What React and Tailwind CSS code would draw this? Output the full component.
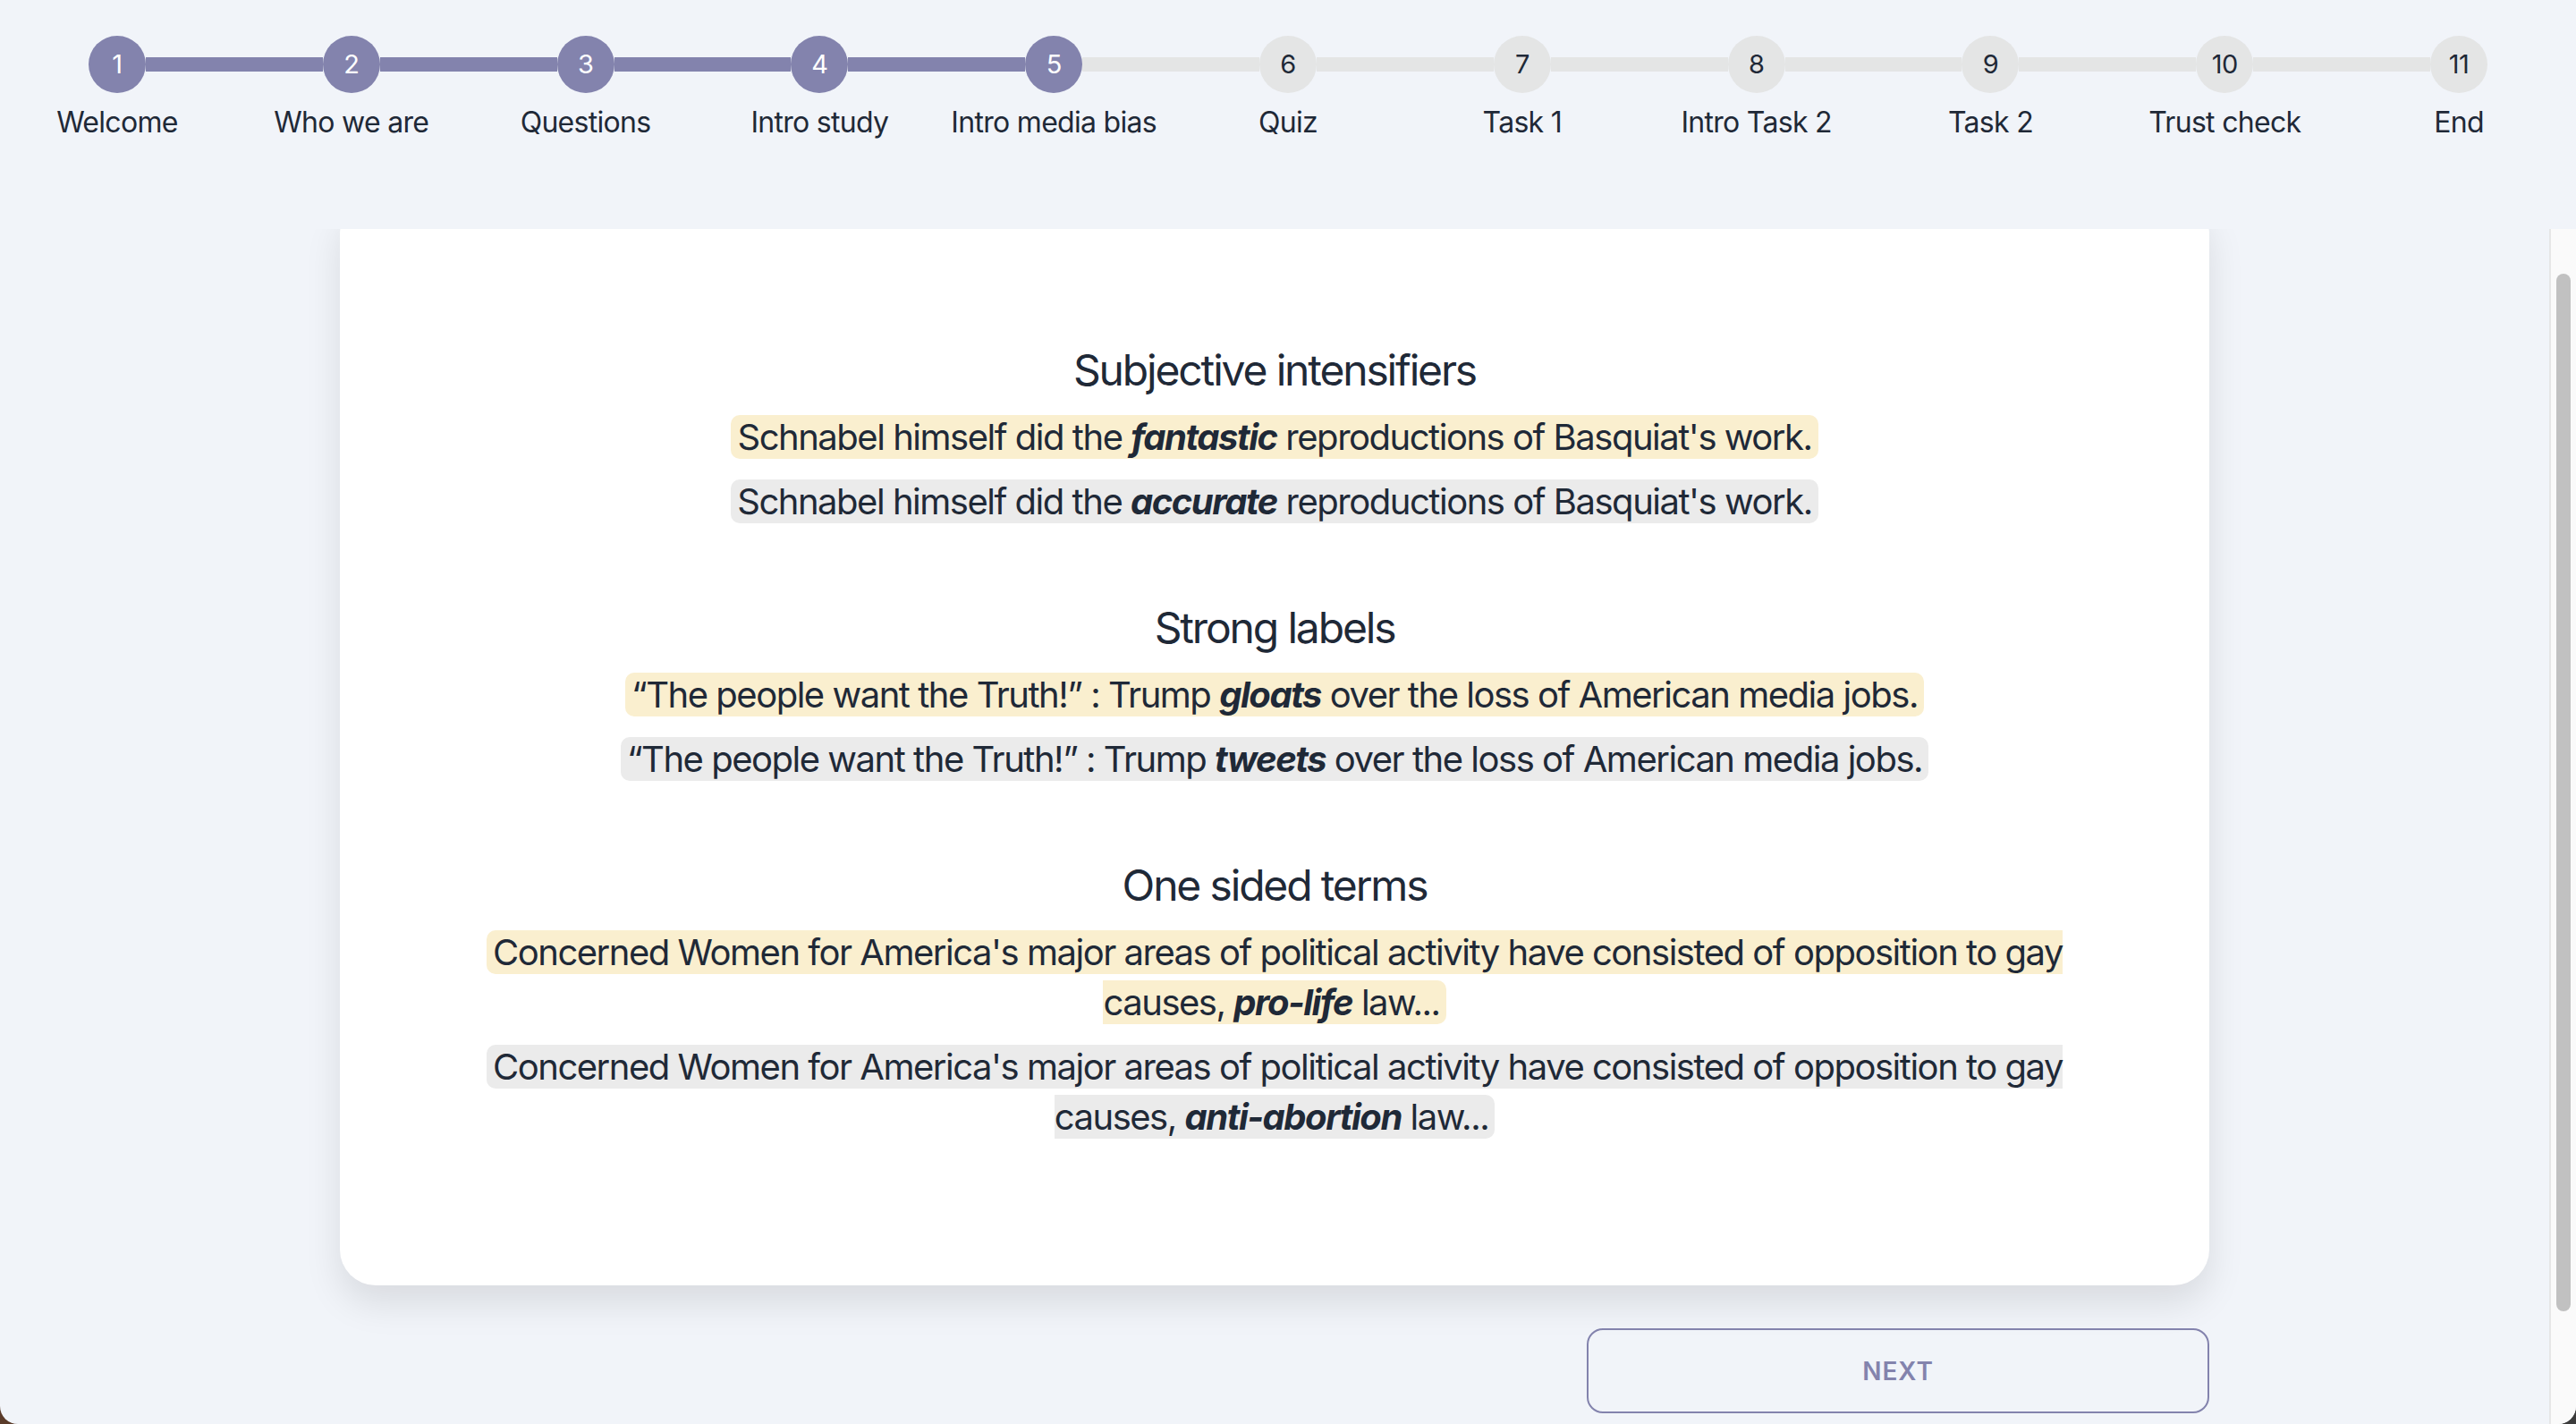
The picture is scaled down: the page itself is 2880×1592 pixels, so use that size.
import React, { useLayoutEffect, useRef } from "react";

const steps = [
  "Welcome",
  "Who we are",
  "Questions",
  "Intro study",
  "Intro media bias",
  "Quiz",
  "Task 1",
  "Intro Task 2",
  "Task 2",
  "Trust check",
  "End",
];
const ACTIVE = 5;

function Step({ index, label }) {
  const n = index + 1;
  const done = n <= ACTIVE;
  const first = index === 0;
  const last = index === steps.length - 1;
  const leftCls = first
    ? "h-[16px] flex-1"
    : n <= ACTIVE
    ? "h-[16px] flex-1 bg-[#8383ad]"
    : "h-[16px] flex-1 bg-[#e4e5e5]";
  const rightCls = last
    ? "h-[16px] flex-1"
    : n < ACTIVE
    ? "h-[16px] flex-1 bg-[#8383ad]"
    : "h-[16px] flex-1 bg-[#e4e5e5]";
  return (
    <div className="flex flex-col items-center">
      <div className="flex w-full items-center">
        <div className={leftCls} />
        <div
          className={
            done
              ? "flex h-[64px] w-[64px] items-center justify-center rounded-full bg-[#8383ad] text-[29px] tracking-[-0.02em] text-white"
              : "flex h-[64px] w-[64px] items-center justify-center rounded-full bg-[#e4e5e5] text-[29px] tracking-[-0.02em] text-[#1f2937]"
          }
        >
          {n}
        </div>
        <div className={rightCls} />
      </div>
      <div className="mt-[9px] whitespace-nowrap text-[32px] leading-[48px] tracking-[-0.022em] text-[#1f2937]">
        {label}
      </div>
    </div>
  );
}

function Mark({ yellow, children }) {
  return (
    <span
      className={
        yellow
          ? "rounded-[10px] bg-[#faefcf] px-[7px]"
          : "rounded-[10px] bg-[#ebebeb] px-[7px]"
      }
    >
      {children}
    </span>
  );
}

function B({ children }) {
  return <b className="font-bold italic">{children}</b>;
}

function Section({ title, children }) {
  return (
    <section className="flex flex-col">
      <h2 className="mb-[15px] text-center text-[48px] leading-[64px] font-normal tracking-[-0.045em] text-[#1f2937]">
        {title}
      </h2>
      <div className="flex flex-col gap-[16px]">{children}</div>
    </section>
  );
}

function P({ children }) {
  return (
    <p className="text-center text-[40px] leading-[56px] tracking-[-0.037em] text-[#1f2937]">
      {children}
    </p>
  );
}

function FakeScrollbar() {
  return (
    <div className="flex w-[30px] shrink-0 flex-col border-l-2 border-[#e6e6e6] bg-[#fafafa] pt-[50px] pl-[6px]">
      <div className="h-[1160px] w-[16px] rounded-full bg-[#c1c1c1]" />
    </div>
  );
}

export default function App() {
  const ref = useRef(null);
  useLayoutEffect(() => {
    if (ref.current) ref.current.scrollTop = 58;
  }, []);

  return (
    <div className="h-screen bg-linear-to-r from-[#5a3b2a] to-[#3c3c3c] font-['Inter','Noto_Sans',sans-serif]">
      <div className="flex h-full flex-col overflow-hidden rounded-b-[20px] bg-[#f1f4f9]">
        <header className="h-[256px] shrink-0 pt-[40px]">
          <div className="grid grid-cols-11">
            {steps.map((s, i) => (
              <Step key={s} index={i} label={s} />
            ))}
          </div>
        </header>

        <div className="flex min-h-0 flex-1">
          <div
            ref={ref}
            className="min-w-0 flex-1 overflow-y-auto [scrollbar-width:none]"
          >
            <div className="mx-auto flex w-[2090px] flex-col pt-[24px] pb-[157px]">
              <div className="flex flex-col gap-[81px] rounded-[40px] bg-white px-[150px] pt-[160px] pb-[160px] shadow-[0_20px_40px_rgba(0,0,0,0.10)]">
                <Section title="Subjective intensifiers">
                  <P>
                    <Mark yellow>
                      Schnabel himself did the <B>fantastic</B> reproductions of Basquiat's work.
                    </Mark>
                  </P>
                  <P>
                    <Mark>
                      Schnabel himself did the <B>accurate</B> reproductions of Basquiat's work.
                    </Mark>
                  </P>
                </Section>

                <Section title="Strong labels">
                  <P>
                    <Mark yellow>
                      “The people want the Truth!” : Trump <B>gloats</B> over the loss of American media jobs.
                    </Mark>
                  </P>
                  <P>
                    <Mark>
                      “The people want the Truth!” : Trump <B>tweets</B> over the loss of American media jobs.
                    </Mark>
                  </P>
                </Section>

                <Section title="One sided terms">
                  <P>
                    <Mark yellow>
                      Concerned Women for America's major areas of political activity have consisted of opposition to gay causes, <B>pro-life</B> law...
                    </Mark>
                  </P>
                  <P>
                    <Mark>
                      Concerned Women for America's major areas of political activity have consisted of opposition to gay causes, <B>anti-abortion</B> law...
                    </Mark>
                  </P>
                </Section>
              </div>

              <div className="mt-[48px] flex justify-end">
                <button className="h-[95px] w-[696px] rounded-[18px] border-2 border-[#8383ad] text-[28px] font-semibold tracking-[1px] text-[#8383ad]">
                  NEXT
                </button>
              </div>
            </div>
          </div>
          <FakeScrollbar />
        </div>
      </div>
    </div>
  );
}
